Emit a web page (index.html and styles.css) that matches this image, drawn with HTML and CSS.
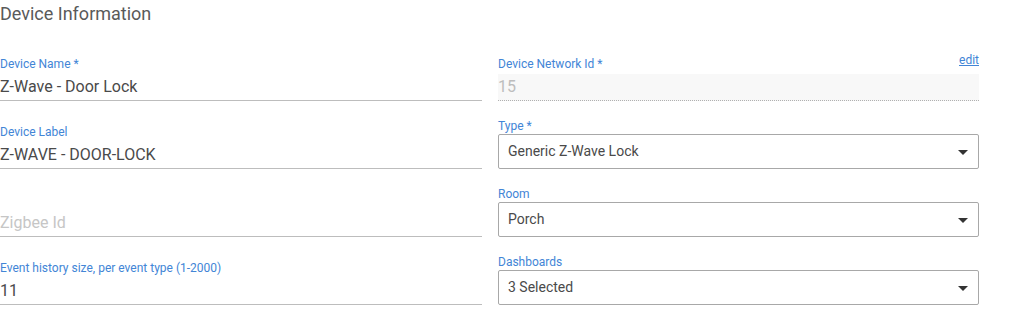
FILE: index.html
```html
<!DOCTYPE html>
<html lang="en">
<head>
    <meta charset="UTF-8">
    <meta name="viewport" content="width=device-width, initial-scale=1.0">
    <title>Device Information</title>
    <link rel="stylesheet" href="styles.css">
</head>
<body>
    <div id="device-info">
        <h2>Device Information</h2>
        <div class="form-grid">
            <div class="field">
                <label>Device Name *</label>
                <div class="text-input">Z-Wave - Door Lock</div>
            </div>
            <div class="field">
                <div class="label-row">
                    <label>Device Network Id *</label>
                    <a href="#" class="edit-link">edit</a>
                </div>
                <div class="text-input disabled">15</div>
            </div>

            <div class="field">
                <label>Device Label</label>
                <div class="text-input">Z-WAVE - DOOR-LOCK</div>
            </div>
            <div class="field">
                <label>Type *</label>
                <div class="select-box">
                    <span>Generic Z-Wave Lock</span>
                    <span class="caret"></span>
                </div>
            </div>

            <div class="field">
                <div class="text-input placeholder">Zigbee Id</div>
            </div>
            <div class="field">
                <label>Room</label>
                <div class="select-box">
                    <span>Porch</span>
                    <span class="caret"></span>
                </div>
            </div>

            <div class="field">
                <label>Event history size, per event type (1-2000)</label>
                <div class="text-input">11</div>
            </div>
            <div class="field">
                <label>Dashboards</label>
                <div class="select-box">
                    <span>3 Selected</span>
                    <span class="caret"></span>
                </div>
            </div>
        </div>
    </div>
</body>
</html>
```

FILE: styles.css
```css
body {
    font-family: Roboto, "Liberation Sans", Arial, sans-serif;
    background-color: #ffffff;
    color: #505050;
    margin: 0;
    padding: 0;
}

#device-info {
    width: 979px;
}

h2 {
    font-size: 18px;
    font-weight: 400;
    line-height: 24px;
    color: #5a5a5a;
    margin: 2px 0 31px 0;
}

.form-grid {
    display: grid;
    grid-template-columns: 482px 481px;
    column-gap: 16px;
    row-gap: 18px;
    align-items: end;
}

.field {
    display: flex;
    flex-direction: column;
}

.field label {
    display: block;
    font-size: 12px;
    line-height: 14px;
    color: #4285d6;
    margin-bottom: 3px;
}

.label-row {
    display: flex;
    justify-content: space-between;
    align-items: flex-start;
}

.edit-link {
    font-size: 12px;
    line-height: 14px;
    color: #4285d6;
    text-decoration: underline;
    margin-top: -4px;
}

.text-input {
    font-size: 16px;
    line-height: 24px;
    height: 24px;
    padding-top: 1px;
    padding-bottom: 1px;
    border-bottom: 1px solid #bdbdbd;
    color: #4a4a4a;
}

.text-input.placeholder {
    color: #c6c6c6;
}

.text-input.disabled {
    background-color: #f8f8f8;
    color: #bdbdbd;
    border-bottom: 1px dotted #b0b0b0;
    height: 25px;
    padding-top: 1px;
    padding-bottom: 0;
}

.field .select-box {
    margin-top: -2px;
}

.select-box {
    display: flex;
    justify-content: space-between;
    align-items: center;
    height: 33px;
    padding: 0 10px 0 9px;
    border: 1px solid #a8a8a8;
    border-radius: 2px;
    font-size: 14px;
    color: #4a4a4a;
}

.select-box span:first-child {
    margin-top: -1px;
}

.caret {
    width: 0;
    height: 0;
    border-left: 5.5px solid transparent;
    border-right: 5.5px solid transparent;
    border-top: 5px solid #333333;
    margin-top: 1px;
}
```
